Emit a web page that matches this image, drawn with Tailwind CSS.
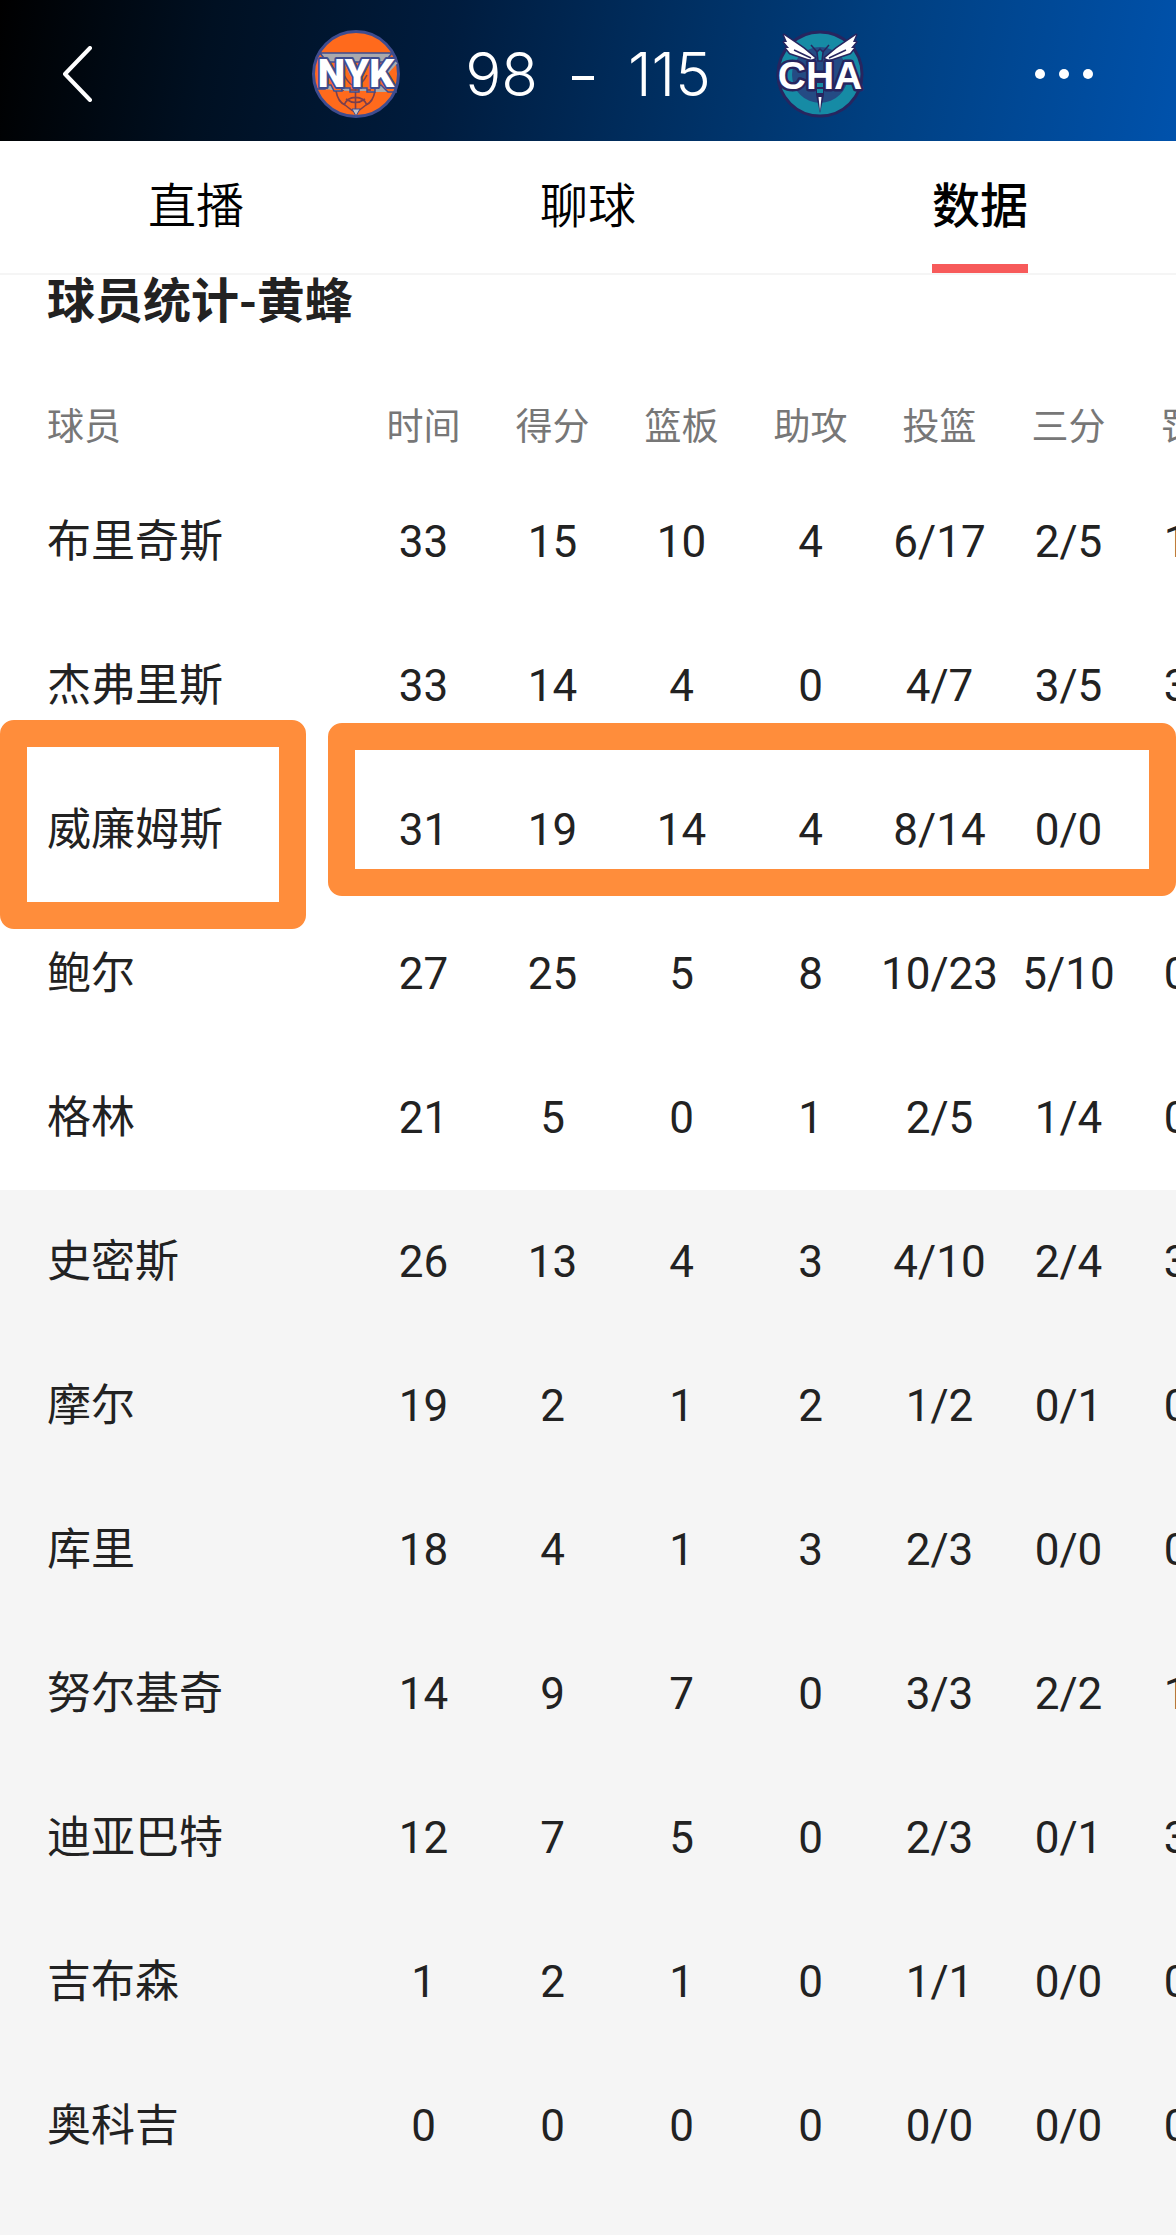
<!doctype html>
<html lang="zh-CN">

<head>
    <title>NYK 98 - 115 CHA</title>
    <meta charset="utf-8" />
    <meta name="viewport" content="width=device-width, initial-scale=1" />
    <script src="https://cdn.jsdelivr.net/npm/@tailwindcss/browser@4"></script>
</head>

<body class="min-h-screen flex flex-col overflow-x-hidden bg-[#f5f5f5] font-[Roboto,'Noto_Sans_CJK_SC',sans-serif] text-[#222]">

    <header class="grid grid-cols-[1fr_auto_1fr] items-center h-[141px] pt-1.5 px-[52px] text-white bg-[linear-gradient(100deg,#000_0%,#001022_18%,#001c3e_38%,#002c5c_54%,#003f80_74%,#0052ac_100%)]">
        <button type="button" aria-label="返回" class="justify-self-start p-2">
            <svg class="w-9 h-14" viewBox="0 0 36 56" fill="none" stroke="#fff" stroke-width="4" stroke-linecap="round" stroke-linejoin="round">
                <path d="M30 2 L5 28 L30 54" />
            </svg>
        </button>
        <div class="flex items-center gap-16">
            <svg class="w-[90px] h-[90px]" viewBox="0 0 90 90" role="img" aria-label="NYK">
                <circle cx="45" cy="45" r="42.5" fill="#ff6a1c" stroke="#3e4c8f" stroke-width="3" />
                <g fill="none" stroke="#7a3f4e" stroke-width="1.6">
                    <path d="M25 62 Q27 73 34 76 Q39 80 42 82 M64 62 Q62 73 55 76 Q50 80 47 82" />
                    <path d="M33 76 A12.5 12.5 0 0 1 56 76 M35 70 Q44.500 77 54 70 M44.500 46 V80 M33 46 Q44.500 68 56 46 M30 61 H60" />
                </g>
                <path d="M9 24 H81 L74 33 H16 Z" fill="#a9a9ad" stroke="#3e4c8f" stroke-width="1.600" />
                <path d="M5 60 H14 V56 H20 L23 62 H31 V59 H39 V63 H48 V59 H56 V63 H64 V58 L70 56 L77 63 H86" fill="#a9a9ad" stroke="#3e4c8f" stroke-width="1.500" />
                <path d="M41 80 H49 L45 87 Z" fill="#c3c3c8" stroke="#3e4c8f" />
                <path d="M35 32 L41 46 M50 46 L57 32 M73 46 L85 33" stroke="#a9a9ad" stroke-width="4" />
                <text x="45" y="58" text-anchor="middle" font-family="Roboto" font-weight="900" font-size="39" fill="#fff" stroke="#3e4c8f" stroke-width="4" stroke-linejoin="round" paint-order="stroke">NYK</text>
            </svg>
            <div class="flex items-center gap-[34px] font-[Inter,sans-serif] text-[60px] leading-[64px] font-light">
                <span>98</span>
                <span class="w-[22px] h-1 mt-2 bg-white" role="img" aria-label="-"></span>
                <span>115</span>
            </div>
            <svg class="w-[90px] h-[90px]" viewBox="0 0 90 90" role="img" aria-label="CHA">
                <circle cx="45" cy="45" r="42" fill="#168ba5" stroke="#27255f" stroke-width="3" />
                <circle cx="45" cy="46" r="28" fill="#244b84" />
                <g fill="#fff" stroke="#27255f" stroke-width="3" stroke-linejoin="round" paint-order="stroke">
                    <path d="M9 6 L28 19 L40 29 L36 31 L15 24 L11 19 L14 19 L9 13 L12 13 Z" />
                    <path d="M81 6 L62 19 L50 29 L54 31 L75 24 L79 19 L76 19 L81 13 L78 13 Z" />
                </g>
                <path d="M19 21 L36 29 M71 21 L54 29 M36 16 L43 24 M54 16 L47 24" stroke="#27255f" stroke-width="1.500" />
                <path d="M42 23 L45 20 L48 23 L47 32 H43 Z" fill="#168ba5" stroke="#27255f" stroke-width="1.500" />
                <path d="M41 50 H49 V66 L45 84 L41 66 Z" fill="#27255f" />
                <path d="M42 60 H48 V64 H42 Z" fill="#168ba5" />
                <path d="M43.500 68 H46.500 L45 82 Z" fill="#fff" />
                <text x="45" y="60" text-anchor="middle" font-family="Liberation Sans" font-weight="700" font-size="39" fill="#fff" stroke="#27255f" stroke-width="5" stroke-linejoin="round" paint-order="stroke">CHA</text>
                <path d="M42 54 H48 V58 H42 Z" fill="#168ba5" />
            </svg>
        </div>
        <button type="button" aria-label="更多" class="justify-self-end mr-7 py-4">
            <svg class="w-[68px] h-3" viewBox="0 0 68 12" fill="#fff">
                <circle cx="12" cy="6" r="5" />
                <circle cx="36" cy="6" r="5" />
                <circle cx="60" cy="6" r="5" />
            </svg>
        </button>
    </header>

    <nav class="grid grid-cols-3 h-[134px] bg-white border-b-2 border-[#f5f5f5] text-5xl text-black">
        <a href="#live" class="flex justify-center"><span class="pt-2 leading-[115px] font-[350]">直播</span></a>
        <a href="#chat" class="flex justify-center"><span class="pt-2 leading-[115px] font-[350]">聊球</span></a>
        <a href="#stats" class="flex justify-center" aria-current="page"><span class="pt-2 leading-[115px] font-medium border-b-9 border-[#f75a5a]">数据</span></a>
    </nav>

    <main id="stats">
        <h1 class="h-[107px] px-[47px] bg-white font-['Noto_Sans_CJK_SC',sans-serif] text-5xl leading-11 font-bold">球员统计-黄蜂</h1>

        <div class="relative">
            <div class="overflow-x-auto [scrollbar-width:none]">
                <table class="table-fixed w-[1262px] text-[44px] text-center whitespace-nowrap">
                    <thead class="bg-white text-[37px] text-[#777]">
                        <tr class="h-[88px]">
                            <th scope="col" class="w-[359px] pt-1 pl-[47px] text-left font-normal">球员</th>
                            <th scope="col" class="w-[129px] pt-1 font-normal">时间</th>
                            <th scope="col" class="w-[129px] pt-1 font-normal">得分</th>
                            <th scope="col" class="w-[129px] pt-1 font-normal">篮板</th>
                            <th scope="col" class="w-[129px] pt-1 font-normal">助攻</th>
                            <th scope="col" class="w-[129px] pt-1 font-normal">投篮</th>
                            <th scope="col" class="w-[129px] pt-1 font-normal">三分</th>
                            <th scope="col" class="w-[129px] pt-1 font-normal">罚球</th>
                        </tr>
                    </thead>
                    <!-- starters -->
                    <tbody class="bg-white">
                        <tr class="h-36"><th scope="row" class="pl-[47px] text-left font-normal">布里奇斯</th><td>33</td><td>15</td><td>10</td><td>4</td><td>6/17</td><td>2/5</td><td>1/1</td></tr>
                        <tr class="h-36"><th scope="row" class="pl-[47px] text-left font-normal">杰弗里斯</th><td>33</td><td>14</td><td>4</td><td>0</td><td>4/7</td><td>3/5</td><td>3/3</td></tr>
                        <tr class="h-36"><th scope="row" class="pl-[47px] text-left font-normal">威廉姆斯</th><td>31</td><td>19</td><td>14</td><td>4</td><td>8/14</td><td>0/0</td><td>3/3</td></tr>
                        <tr class="h-36"><th scope="row" class="pl-[47px] text-left font-normal">鲍尔</th><td>27</td><td>25</td><td>5</td><td>8</td><td>10/23</td><td>5/10</td><td>0/0</td></tr>
                        <tr class="h-36"><th scope="row" class="pl-[47px] text-left font-normal">格林</th><td>21</td><td>5</td><td>0</td><td>1</td><td>2/5</td><td>1/4</td><td>0/0</td></tr>
                    </tbody>
                    <!-- bench -->
                    <tbody>
                        <tr class="h-36"><th scope="row" class="pl-[47px] text-left font-normal">史密斯</th><td>26</td><td>13</td><td>4</td><td>3</td><td>4/10</td><td>2/4</td><td>3/3</td></tr>
                        <tr class="h-36"><th scope="row" class="pl-[47px] text-left font-normal">摩尔</th><td>19</td><td>2</td><td>1</td><td>2</td><td>1/2</td><td>0/1</td><td>0/0</td></tr>
                        <tr class="h-36"><th scope="row" class="pl-[47px] text-left font-normal">库里</th><td>18</td><td>4</td><td>1</td><td>3</td><td>2/3</td><td>0/0</td><td>0/0</td></tr>
                        <tr class="h-36"><th scope="row" class="pl-[47px] text-left font-normal">努尔基奇</th><td>14</td><td>9</td><td>7</td><td>0</td><td>3/3</td><td>2/2</td><td>1/1</td></tr>
                        <tr class="h-36"><th scope="row" class="pl-[47px] text-left font-normal">迪亚巴特</th><td>12</td><td>7</td><td>5</td><td>0</td><td>2/3</td><td>0/1</td><td>3/3</td></tr>
                        <tr class="h-36"><th scope="row" class="pl-[47px] text-left font-normal">吉布森</th><td>1</td><td>2</td><td>1</td><td>0</td><td>1/1</td><td>0/0</td><td>0/0</td></tr>
                        <tr class="h-36"><th scope="row" class="pl-[47px] text-left font-normal">奥科吉</th><td>0</td><td>0</td><td>0</td><td>0</td><td>0/0</td><td>0/0</td><td>0/0</td></tr>
                    </tbody>
                </table>
            </div>

            <!-- highlight frames round the third row -->
            <div class="absolute left-0 top-[338px] w-[306px] h-[209px] border-27 border-[#ff8d3b] rounded-[14px] pointer-events-none"></div>
            <div class="absolute left-[328px] right-0 top-[341px] h-[173px] border-27 border-[#ff8d3b] rounded-[14px] pointer-events-none"></div>
        </div>
    </main>

</body>

</html>
